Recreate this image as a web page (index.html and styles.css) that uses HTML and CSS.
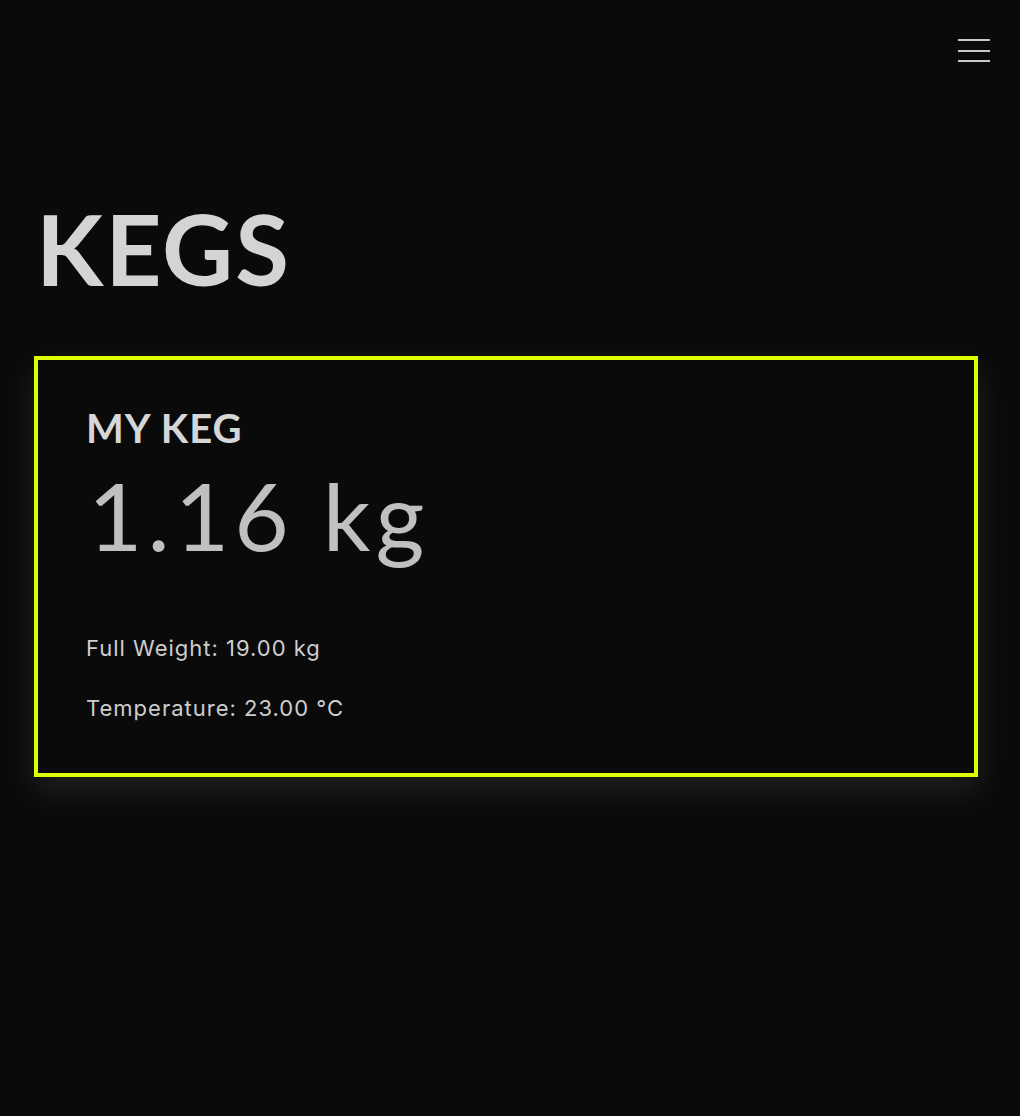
FILE: index.html
```html
<!DOCTYPE html>
<html>
<head>
<meta charset="utf-8">
<link rel="stylesheet" href="styles.css">
</head>
<body>
<header class="topbar">
  <button class="menu" aria-label="Menu">
    <span></span><span></span><span></span>
  </button>
</header>
<main class="content">
  <h1 class="title">KEGS</h1>
  <section class="card">
    <h2 class="keg-name">MY KEG</h2>
    <div class="keg-weight">1.16 kg</div>
    <p class="meta">Full Weight: 19.00 kg</p>
    <p class="meta">Temperature: 23.00 °C</p>
  </section>
</main>
</body>
</html>
```

FILE: styles.css
```css
html, body {
  margin: 0;
  padding: 0;
  background: #0a0a0a;
  height: 100%;
}
body {
  font-family: "Inter", "Noto Sans", sans-serif;
  color: #cfcfcf;
}
.topbar {
  display: flex;
  justify-content: flex-end;
  padding: 39px 30px 0 0;
  height: 50px;
}
.menu {
  display: flex;
  flex-direction: column;
  gap: 8.5px;
  background: none;
  border: 0;
  padding: 0;
  width: 32px;
  height: 24px;
}
.menu span {
  display: block;
  width: 32px;
  height: 2px;
  background: #c8c8c8;
}
.content {
  padding: 0 42px 0 34px;
}
.title {
  margin: 109px 0 0 2px;
  font-family: "Lato", "Open Sans", sans-serif;
  font-weight: 700;
  font-size: 98px;
  line-height: 100px;
  letter-spacing: 2px;
  color: #d4d4d4;
}
.card {
  margin-top: 58px;
  border: 4px solid #ddff00;
  padding: 44px 48px 35px 48px;
  box-shadow: 0 14px 32px rgba(140, 140, 140, 0.18);
}
.keg-name {
  margin: 0;
  font-family: "Lato", "Open Sans", sans-serif;
  font-weight: 700;
  font-size: 40px;
  line-height: 48px;
  letter-spacing: 1px;
  color: #d6d6d6;
}
.keg-weight {
  font-family: "Lato", "Open Sans", sans-serif;
  font-weight: 400;
  font-size: 94px;
  line-height: 113px;
  letter-spacing: 5px;
  color: #c0c0c0;
  margin: 6px 0 47px 2px;
}
.meta {
  margin: 0;
  font-size: 22px;
  letter-spacing: 1px;
  line-height: 60px;
  color: #cdcdcd;
}
```
